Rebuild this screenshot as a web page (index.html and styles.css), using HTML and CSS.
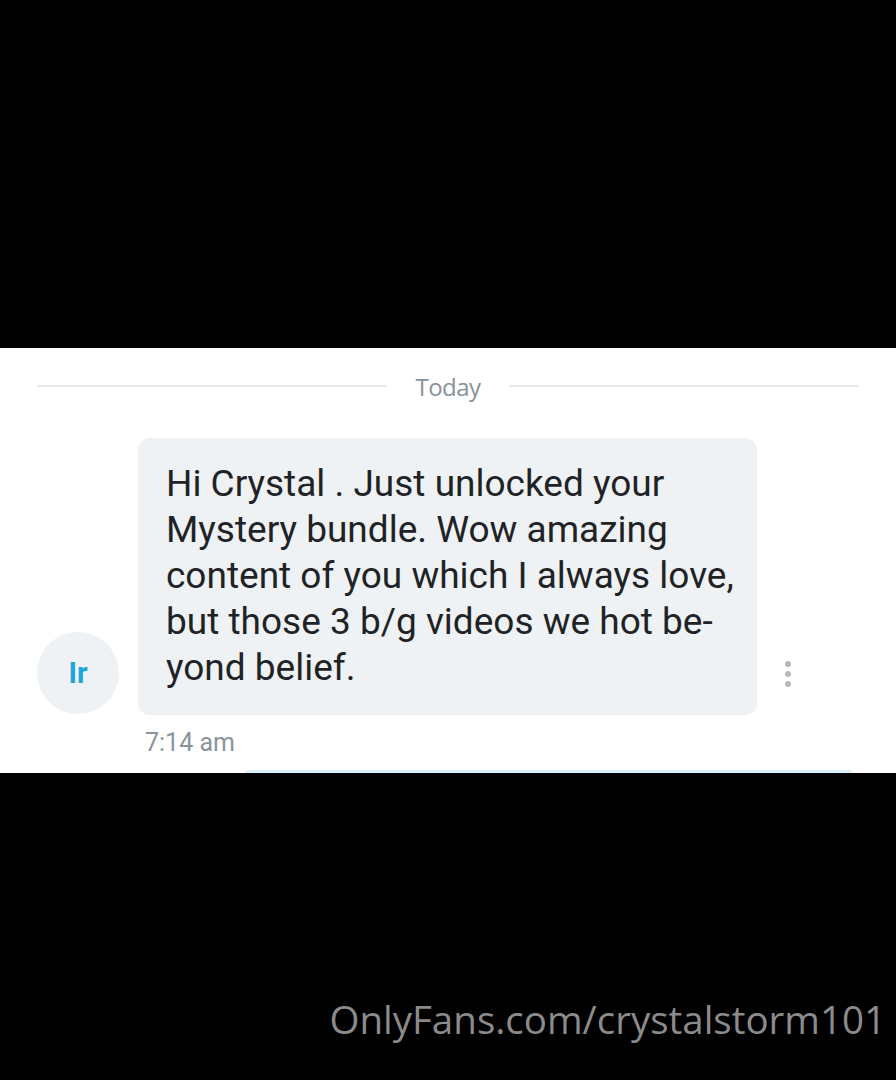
FILE: index.html
```html
<!DOCTYPE html>
<html lang="en">
<head>
    <meta charset="UTF-8">
    <meta name="viewport" content="width=device-width, initial-scale=1.0">
    <title>Messages</title>
    <link rel="stylesheet" href="styles.css">
</head>
<body>
    <div class="top"></div>
    <div class="chat">
        <div class="day">
            <span class="line"></span>
            <span class="day-text">Today</span>
            <span class="line"></span>
        </div>
        <div class="msg">
            <div class="avatar">Ir</div>
            <div class="bubble">Hi Crystal . Just unlocked your<br>Mystery bundle. Wow amazing<br>content of you which I always love,<br>but those 3 b/g videos we hot be-<br>yond belief.</div>
            <div class="more">
                <span></span><span></span><span></span>
            </div>
        </div>
        <div class="time">7:14 am</div>
        <div class="next"></div>
    </div>
    <div class="bottom">
        <div class="mark">OnlyFans.com/crystalstorm101</div>
    </div>
</body>
</html>
```

FILE: styles.css
```css
body{
    margin: 0;
    padding: 0;
    background-color: #000;
    font-family: Roboto, "Liberation Sans", sans-serif;
}
.top{
    height: 348px;
}
.chat{
    height: 425px;
    background-color: #fff;
    overflow: hidden;
    display: flex;
    flex-direction: column;
}
.day{
    display: flex;
    align-items: center;
    gap: 28px;
    padding: 22px 37px 0 37px;
    height: 32px;
}
.line{
    flex: 1;
    height: 2px;
    background-color: #e7e9ec;
}
.day-text{
    font-family: "Open Sans", sans-serif;
    font-size: 24px;
    color: #88929b;
    letter-spacing: -0.5px;
}
.msg{
    display: flex;
    align-items: flex-end;
    margin-top: 36px;
    padding-left: 37px;
}
.avatar{
    width: 82px;
    height: 82px;
    border-radius: 50%;
    background-color: #eff2f4;
    color: #1ea5da;
    font-size: 29px;
    font-weight: bold;
    display: flex;
    align-items: center;
    justify-content: center;
    margin-bottom: 1px;
}
.bubble{
    margin-left: 19px;
    width: 591px;
    padding: 23px 0 24px 28px;
    background-color: #eff2f4;
    border-radius: 12px;
    font-size: 37px;
    line-height: 46px;
    color: #1f2326;
}
.more{
    display: flex;
    flex-direction: column;
    gap: 4px;
    margin-left: 28px;
    margin-bottom: 28px;
}
.more span{
    width: 6px;
    height: 6px;
    border-radius: 50%;
    background-color: #b4b9bd;
}
.time{
    padding-left: 145px;
    margin-top: 13px;
    font-size: 25px;
    color: #8a949d;
}
.next{
    margin: 13px 44px 0 245px;
    height: 8px;
    background-color: #dcf0f9;
    border-radius: 8px 8px 0 0;
}
.bottom{
    height: 307px;
    display: flex;
    justify-content: flex-end;
}
.mark{
    margin-top: 220px;
    margin-right: 10px;
    font-family: "Open Sans", sans-serif;
    font-size: 38.5px;
    color: #8b8b8b;
}
```
